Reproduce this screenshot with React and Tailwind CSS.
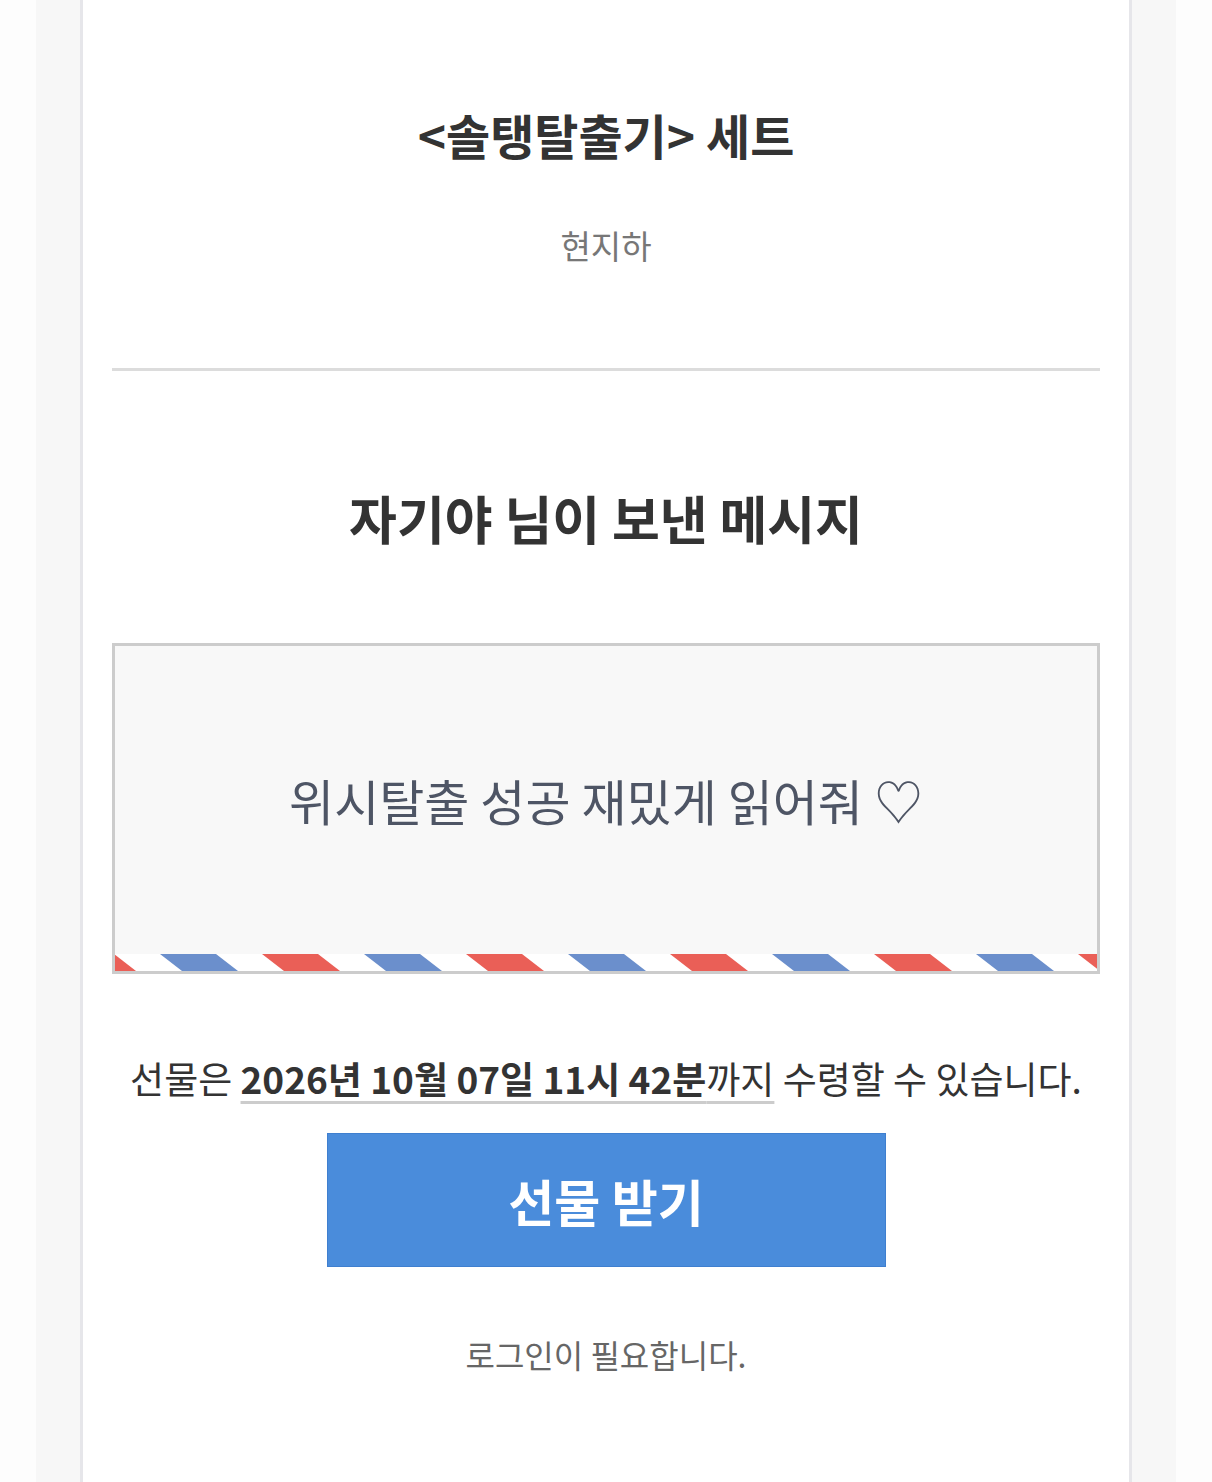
import React from "react";

function AirmailStripe() {
  // red / blue slanted bars, 204px period
  const bars = [];
  for (let i = 0, s = -57; s < 1000; i++, s += 102) {
    bars.push(
      <polygon
        key={i}
        points={`${s},0 ${s + 56},0 ${s + 78},17 ${s + 22},17`}
        fill={i % 2 === 0 ? "#ea5f57" : "#6b8fcc"}
      />
    );
  }
  return (
    <svg className="block w-full h-[17px] bg-white" viewBox="0 0 982 17" preserveAspectRatio="none">
      {bars}
    </svg>
  );
}

export default function App() {
  return (
    <div className="min-h-[1482px] bg-[#fdfdfd] px-[36px] font-['Noto_Sans_CJK_KR',sans-serif]">
      <div className="min-h-[1482px] bg-[#f7f7f7] px-[44px]">
        <div className="min-h-[1482px] bg-white border-x-[3px] border-[#e6e6ea] px-[29px] pt-[104px] pb-[100px] flex flex-col items-center">
          {/* Product */}
          <h1 className="text-[48px] leading-[60px] font-bold text-[#333]">&lt;솔탱탈출기&gt; 세트</h1>
          <p className="mt-[61px] text-[33px] leading-[40px] text-[#777]">현지하</p>

          <div className="mt-[103px] w-full h-[3px] bg-[#dcdcdc]" />

          {/* Message */}
          <h2 className="mt-[115px] text-[52px] leading-[64px] font-bold text-[#333]">자기야 님이 보낸 메시지</h2>

          <div className="mt-[93px] w-full border-[3px] border-[#cccccc] bg-[#f8f8f8] flex flex-col">
            <div className="h-[308px] flex items-center justify-center">
              <p className="text-[49px] leading-[56px] text-[#4e5565]">위시탈출 성공 재밌게 읽어줘 ♡</p>
            </div>
            <AirmailStripe />
          </div>

          {/* Receive */}
          <p className="mt-[80px] text-[37px] leading-[48px] text-[#333] whitespace-nowrap">
            선물은{" "}
            <span className="underline decoration-[#cccccc] decoration-[length:3px] underline-offset-[7px]">
              <span className="font-bold">2026년 10월 07일 11시 42분</span>까지
            </span>{" "}
            수령할 수 있습니다.
          </p>

          <button className="mt-[31px] w-[559px] h-[134px] bg-[#4a8cdb] border border-[#3f7fcf] text-white text-[50px] font-bold">
            선물 받기
          </button>

          <p className="mt-[67px] text-[32px] leading-[40px] text-[#666]">로그인이 필요합니다.</p>
        </div>
      </div>
    </div>
  );
}
